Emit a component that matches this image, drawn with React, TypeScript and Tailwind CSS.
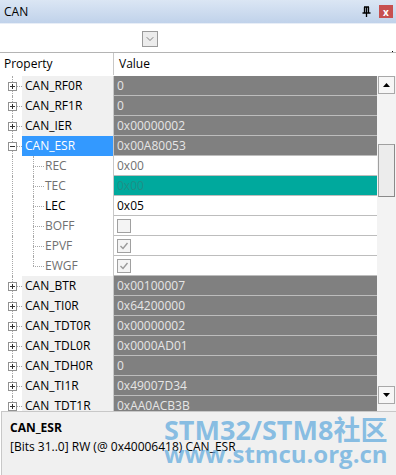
import { ChevronDown } from "lucide-react"

type Row = {
  name: string
  value?: string
  kind: "reg" | "sel" | "field" | "check"
  open?: boolean
  checked?: boolean
  dim?: boolean
  teal?: boolean
}

const rows: Row[] = [
  { name: "CAN_RF0R", value: "0", kind: "reg" },
  { name: "CAN_RF1R", value: "0", kind: "reg" },
  { name: "CAN_IER", value: "0x00000002", kind: "reg" },
  { name: "CAN_ESR", value: "0x00A80053", kind: "sel", open: true },
  { name: "REC", value: "0x00", kind: "field", dim: true },
  { name: "TEC", value: "0x00", kind: "field", dim: true, teal: true },
  { name: "LEC", value: "0x05", kind: "field" },
  { name: "BOFF", kind: "check", dim: true },
  { name: "EPVF", kind: "check", dim: true, checked: true },
  { name: "EWGF", kind: "check", dim: true, checked: true },
  { name: "CAN_BTR", value: "0x00100007", kind: "reg" },
  { name: "CAN_TI0R", value: "0x64200000", kind: "reg" },
  { name: "CAN_TDT0R", value: "0x00000002", kind: "reg" },
  { name: "CAN_TDL0R", value: "0x0000AD01", kind: "reg" },
  { name: "CAN_TDH0R", value: "0", kind: "reg" },
  { name: "CAN_TI1R", value: "0x49007D34", kind: "reg" },
  { name: "CAN_TDT1R", value: "0xAA0ACB3B", kind: "reg" },
]

function Expander({ open }: { open?: boolean }) {
  return (
    <div className="w-[9px] h-[9px] border border-[#919191] bg-white flex items-center justify-center relative z-10">
      <div className="absolute w-[5px] h-px bg-[#333]" />
      {!open && <div className="absolute w-px h-[5px] bg-[#333]" />}
    </div>
  )
}

function CheckBox({ checked }: { checked?: boolean }) {
  return (
    <div className="w-[14px] h-[14px] border border-[#a0a0a0] bg-[#f4f4f4] flex items-center justify-center">
      {checked && (
        <svg width="10" height="10" viewBox="0 0 10 10">
          <path d="M1.5 5 L4 7.5 L8.5 2" fill="none" stroke="#9a9a9a" strokeWidth="1.4" />
        </svg>
      )}
    </div>
  )
}

function TreeRow({ row, last }: { row: Row; last: boolean }) {
  const sub = row.kind === "field" || row.kind === "check"
  return (
    <div className="flex h-[20px] shrink-0">
      {/* tree gutter */}
      <div className="w-[22px] relative">
        <div className="absolute left-[12px] top-0 bottom-0 border-l border-dotted border-[#a8a8a8]" />
        {!sub && <div className="absolute left-[12px] right-0 top-[10px] border-t border-dotted border-[#a8a8a8]" />}
        {!sub && (
          <div className="absolute left-[8px] top-[6px]">
            <Expander open={row.open} />
          </div>
        )}
      </div>
      {/* property */}
      <div
        className={
          "w-[91px] flex items-center relative whitespace-nowrap " +
          (row.kind === "sel" ? "bg-[#3399ff] text-white" : sub ? "bg-white" : "bg-[#f0f0f0] text-black")
        }
      >
        {sub && (
          <>
            <div className={"absolute left-[11px] top-0 border-l border-dotted border-[#a8a8a8] " + (last ? "h-[10px]" : "bottom-0")} />
            <div className="absolute left-[11px] w-[11px] top-[10px] border-t border-dotted border-[#a8a8a8]" />
          </>
        )}
        <span className={sub ? "pl-[23px] " + (row.dim ? "text-[#707070]" : "text-black") : "pl-[3px]"}>{row.name}</span>
      </div>
      <div className="w-px bg-[#c8c8c8]" />
      {/* value */}
      <div
        className={
          "flex-1 flex items-center pl-[3px] border-b border-[#bdbdbd] whitespace-nowrap " +
          (row.teal
            ? "bg-[#00a99d] text-[#1f8f86]"
            : sub
              ? "bg-white " + (row.dim ? "text-[#6f6f6f]" : "text-black")
              : "bg-[#808080] text-[#e6e6e6]")
        }
      >
        {row.kind === "check" ? <CheckBox checked={row.checked} /> : row.value}
      </div>
    </div>
  )
}

export default function App() {
  return (
    <div
      className="w-[396px] h-[475px] flex flex-col bg-white text-[12px] leading-none overflow-hidden relative"
      style={{ fontFamily: '"Open Sans", "Noto Sans", sans-serif' }}
    >
      {/* title bar */}
      <div className="h-[24px] shrink-0 flex items-center justify-between pl-[4px] pr-[3px] bg-gradient-to-b from-[#dbe6f4] to-[#c0d2ea] border-b border-[#e8eef7]">
        <span className="text-[12px] text-black">CAN</span>
        <div className="flex items-center gap-[8px]">
          <svg width="9" height="11" viewBox="0 0 9 11">
            <path d="M2 1 H7 M2.5 1 V7 M6.5 1 V7 M0.5 7 H8.5 M4.5 7 V11" fill="none" stroke="#000" strokeWidth="1.3" />
            <path d="M4.5 1 V7" stroke="#000" strokeWidth="1.5" />
          </svg>
          <div className="w-[14px] h-[13px] bg-[#c75050] flex items-center justify-center text-white text-[10px] font-bold">
            x
          </div>
        </div>
      </div>

      {/* combobox row */}
      <div className="h-[29px] shrink-0 flex items-center border-b border-[#b4b4b4] relative">
        <div className="ml-[142px] mt-[2px] w-[16px] h-[16px] border border-[#9a9a9a] bg-[#ececec] flex items-center justify-center">
          <ChevronDown size={12} strokeWidth={1.3} className="text-[#444]" />
        </div>
        <div className="absolute right-[3px] bottom-0 w-px h-px bg-black" />
      </div>

      {/* header */}
      <div className="h-[22px] shrink-0 flex items-center">
        <div className="w-[113px] pl-[4px] text-black">Property</div>
        <div className="w-px h-full bg-[#c8c8c8]" />
        <div className="pl-[5px] text-black">Value</div>
      </div>

      {/* tree + scrollbar */}
      <div className="flex-1 flex min-h-0 pt-[1px]">
        <div className="flex-1 flex flex-col overflow-hidden">
          {rows.map((r) => (
            <TreeRow key={r.name} row={r} last={r.name === "EWGF"} />
          ))}
        </div>
        <div className="w-[19px] flex flex-col bg-[#f3f3f3] pl-px">
          <div className="h-[18px] w-[17px] border border-[#a8a8a8] bg-[#f6f6f6] flex items-center justify-center">
            <svg width="7" height="4" viewBox="0 0 7 4">
              <path d="M0 4 L3.5 0 L7 4 Z" fill="#000" />
            </svg>
          </div>
          <div className="h-[50px]" />
          <div className="h-[53px] w-[17px] border border-[#a0a0a0] bg-[#ececec] border-r-[#8a8a8a] border-b-[#8a8a8a]" />
          <div className="flex-1" />
          <div className="h-[18px] w-[17px] border border-[#a8a8a8] bg-[#f6f6f6] flex items-center justify-center mb-[7px]">
            <svg width="7" height="4" viewBox="0 0 7 4">
              <path d="M0 0 L7 0 L3.5 4 Z" fill="#000" />
            </svg>
          </div>
        </div>
      </div>

      {/* description panel */}
      <div className="h-[64px] shrink-0 bg-[#f0f0f0] border-t border-l border-[#c8c8c8] ml-px pl-[8px] pt-[10px] relative">
        <div className="font-bold text-black text-[12px]">CAN_ESR</div>
        <div className="mt-[7px] text-black text-[12px] whitespace-nowrap">[Bits 31..0] RW (@ 0x40006418) CAN_ESR</div>
      </div>

      {/* watermark */}
      <div
        className="absolute left-[164px] top-[416px] pointer-events-none text-[#5aa7dc]/70 font-bold leading-none whitespace-nowrap"
        style={{ fontFamily: '"Open Sans", "Noto Sans CJK SC", sans-serif' }}
      >
        <div className="text-[27px]">STM32/STM8社区</div>
        <div className="text-[24px] mt-[-1px]">www.stmcu.org.cn</div>
      </div>
    </div>
  )
}
